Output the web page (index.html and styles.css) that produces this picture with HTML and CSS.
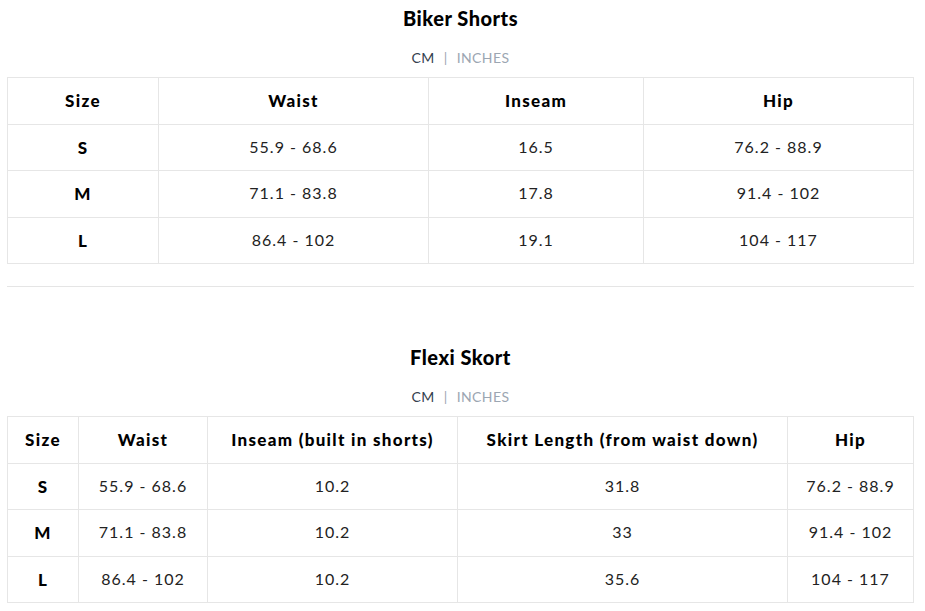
FILE: index.html
```html
<!DOCTYPE html>
<html>
<head>
<meta charset="utf-8">
<link rel="stylesheet" href="styles.css">
</head>
<body>
<div class="page">
  <section class="chart">
    <h2 class="chart-title">Biker Shorts</h2>
    <div class="units"><span class="unit active">CM</span><span class="sep">|</span><span class="unit">INCHES</span></div>
    <table class="size-table">
      <colgroup>
        <col class="c151"><col class="c270"><col class="c215"><col class="c270">
      </colgroup>
      <thead>
        <tr><th>Size</th><th>Waist</th><th>Inseam</th><th>Hip</th></tr>
      </thead>
      <tbody>
        <tr><th>S</th><td>55.9 - 68.6</td><td>16.5</td><td>76.2 - 88.9</td></tr>
        <tr><th>M</th><td>71.1 - 83.8</td><td>17.8</td><td>91.4 - 102</td></tr>
        <tr><th>L</th><td>86.4 - 102</td><td>19.1</td><td>104 - 117</td></tr>
      </tbody>
    </table>
  </section>
  <hr class="divider">
  <section class="chart chart-second">
    <h2 class="chart-title">Flexi Skort</h2>
    <div class="units"><span class="unit active">CM</span><span class="sep">|</span><span class="unit">INCHES</span></div>
    <table class="size-table">
      <colgroup>
        <col class="c71"><col class="c129"><col class="c250"><col class="c330"><col class="c126">
      </colgroup>
      <thead>
        <tr><th>Size</th><th>Waist</th><th>Inseam (built in shorts)</th><th>Skirt Length (from waist down)</th><th>Hip</th></tr>
      </thead>
      <tbody>
        <tr><th>S</th><td>55.9 - 68.6</td><td>10.2</td><td>31.8</td><td>76.2 - 88.9</td></tr>
        <tr><th>M</th><td>71.1 - 83.8</td><td>10.2</td><td>33</td><td>91.4 - 102</td></tr>
        <tr><th>L</th><td>86.4 - 102</td><td>10.2</td><td>35.6</td><td>104 - 117</td></tr>
      </tbody>
    </table>
  </section>
</div>
</body>
</html>
```

FILE: styles.css
```css
html, body {
  margin: 0;
  padding: 0;
  background: #fff;
}
body {
  font-family: "Lato", "Liberation Sans", sans-serif;
  color: #222;
}
.page {
  padding: 0 11px 0 7px;
}
.chart {
  display: flex;
  flex-direction: column;
  align-items: center;
}
.chart-title {
  margin: 0;
  padding-top: 5px;
  font-size: 20px;
  line-height: 26px;
  font-weight: 900;
  color: #000;
  letter-spacing: 0.5px;
}
.units {
  margin-top: 18px;
  font-size: 14px;
  line-height: 18px;
  letter-spacing: 0.4px;
  display: flex;
  gap: 9px;
}
.unit { color: #9ca6b2; }
.unit.active { color: #34404e; }
.sep { color: #9ca6b2; }
.size-table {
  margin-top: 10px;
  width: 100%;
  border-collapse: collapse;
  table-layout: fixed;
}
.size-table th,
.size-table td {
  border: 1px solid #e6e6e6;
  text-align: center;
  padding: 12px 0;
  line-height: 21.5px;
}
.size-table th {
  font-size: 17px;
  font-weight: 900;
  color: #000;
  letter-spacing: 1.3px;
}
.size-table td {
  font-size: 16px;
  color: #222;
  letter-spacing: 1px;
  padding: 11px 0 13px;
}
.c151 { width: 151px; }
.c270 { width: 270px; }
.c215 { width: 215px; }
.c71 { width: 71px; }
.c129 { width: 129px; }
.c250 { width: 250px; }
.c330 { width: 330px; }
.c126 { width: 126px; }
.divider {
  margin: 22px 0 0;
  border: 0;
  border-top: 1px solid #e5e5e5;
  height: 0;
}
.chart-second {
  margin-top: 52px;
}
```
